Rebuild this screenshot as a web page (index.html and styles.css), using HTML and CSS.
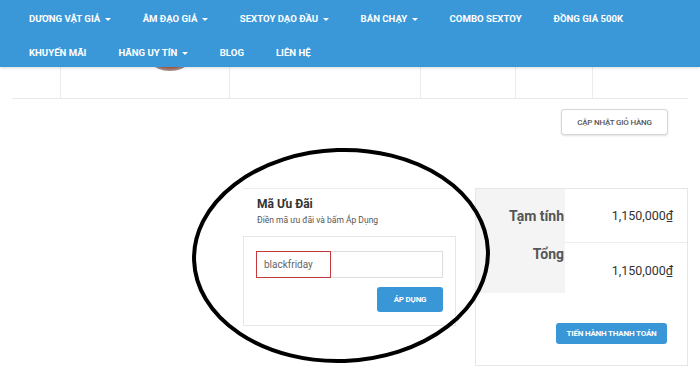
FILE: index.html
```html
<!DOCTYPE html>
<html lang="vi">
  <head>
    <meta charset="UTF-8" />
    <meta name="viewport" content="width=device-width, initial-scale=1.0" />
    <title>Giỏ hàng</title>
    <link rel="stylesheet" href="styles.css">
  </head>
  <body>
    <nav class="navbar">
      <ul>
        <li><a href="#">Dương vật giả <span class="caret"></span></a></li>
        <li><a href="#">Âm đạo giả <span class="caret"></span></a></li>
        <li><a href="#">Sextoy dạo đầu <span class="caret"></span></a></li>
        <li><a href="#">Bán chạy <span class="caret"></span></a></li>
        <li><a href="#">Combo sextoy</a></li>
        <li><a href="#">Đồng giá 500K</a></li>
        <li><a href="#">Khuyến mãi</a></li>
        <li><a href="#">Hãng uy tín <span class="caret"></span></a></li>
        <li><a href="#">Blog</a></li>
        <li><a href="#">Liên hệ</a></li>
      </ul>
    </nav>

    <div class="page">
      <div class="cart-row">
        <div class="cell"></div>
        <div class="cell thumb-cell"><div class="thumb"></div></div>
        <div class="cell"></div>
        <div class="cell"></div>
        <div class="cell"></div>
        <div class="cell"></div>
      </div>

      <div class="cart-actions">
        <button class="btn-update">Cập nhật giỏ hàng</button>
      </div>

      <div class="checkout">
        <div class="coupon">
          <h3>Mã Ưu Đãi</h3>
          <p>Điền mã ưu đãi và bấm Áp Dụng</p>
          <div class="coupon-box">
            <div class="coupon-field">
              <input type="text" value="blackfriday" />
              <span class="mark"></span>
            </div>
            <div class="coupon-submit">
              <button class="btn-blue">Áp dụng</button>
            </div>
          </div>
        </div>

        <div class="totals">
          <table>
            <tr>
              <th>Tạm tính</th>
              <td>1,150,000₫</td>
            </tr>
            <tr class="total-row">
              <th>Tổng</th>
              <td>1,150,000₫</td>
            </tr>
          </table>
          <div class="proceed">
            <button class="btn-blue btn-proceed">Tiến hành thanh toán</button>
          </div>
        </div>
      </div>
    </div>

    <!-- hand drawn circle round the coupon -->
    <svg class="scribble" width="700" height="376" viewBox="0 0 700 376">
      <ellipse cx="341" cy="255.5" rx="147" ry="105.5" transform="rotate(-2 341 255.5)" fill="none" stroke="#000" stroke-width="4" />
    </svg>
  </body>
</html>
```

FILE: styles.css
```css
body {
  font-family: Roboto, "Liberation Sans", sans-serif;
  background-color: #fff;
  color: #333;
  margin: 0;
}
.navbar {
  position: relative;
  z-index: 2;
  height: 67px;
  background-color: #3a98d9;
  box-shadow: 0 1px 3px rgba(0, 0, 0, 0.15);
}
.navbar ul {
  list-style-type: none;
  margin: 0;
  padding: 0 13px;
  display: flex;
  flex-wrap: wrap;
  width: 660px;
}
.navbar li {
  padding: 0 16px;
  height: 34px;
  line-height: 34px;
}
.navbar a {
  color: #fff;
  text-decoration: none;
  text-transform: uppercase;
  font-weight: 700;
  font-size: 9.6px;
}
.caret {
  display: inline-block;
  width: 0;
  height: 0;
  margin-left: 2px;
  vertical-align: middle;
  border-top: 3px solid #fff;
  border-left: 3px solid transparent;
  border-right: 3px solid transparent;
}
.page {
  padding: 0 12px;
}
.cart-row {
  display: grid;
  grid-template-columns: 48px 169px 191px 95px 77px 1fr;
  grid-template-rows: 80px;
  height: 80px;
  margin-top: -49px;
  border-bottom: 1px solid #e9e9e9;
}
.cell + .cell {
  border-left: 1px solid #ececec;
}
.thumb-cell {
  display: flex;
  justify-content: center;
  align-items: flex-end;
  padding-bottom: 27px;
  min-height: 0;
}
.thumb {
  flex-shrink: 0;
  width: 60px;
  height: 60px;
  margin-left: 50px;
  border-radius: 50%;
  border: 2px solid #a08a84;
  background-color: #b8604c;
  box-sizing: border-box;
}
.cart-actions {
  display: flex;
  justify-content: flex-end;
  padding: 10px 20px 0 0;
}
.btn-update {
  height: 26px;
  width: 107px;
  background-color: #fff;
  border: 1px solid #d6d6d6;
  border-radius: 3px;
  box-shadow: 0 1px 2px rgba(0, 0, 0, 0.12);
  color: #555;
  font-family: Roboto, sans-serif;
  font-size: 8px;
  font-weight: 500;
  letter-spacing: -0.2px;
  text-transform: uppercase;
}
.checkout {
  display: flex;
  justify-content: flex-end;
  gap: 19px;
  margin-top: 53px;
}
.coupon {
  width: 213px;
  border-top: 1px solid #ececec;
}
.coupon h3 {
  margin: 0;
  padding: 7px 0 0 14px;
  font-size: 12px;
  line-height: 16px;
  color: #333;
}
.coupon p {
  margin: 0;
  padding: 2px 0 0 14px;
  font-size: 8.5px;
  line-height: 12px;
  color: #555;
}
.coupon-box {
  margin-top: 10px;
  padding: 14px 12px 13px;
  border: 1px solid #e6e6e6;
}
.coupon-field {
  position: relative;
}
.coupon-field input {
  display: block;
  width: 100%;
  height: 27px;
  box-sizing: border-box;
  padding: 0 7px;
  border: 1px solid #dedede;
  font-family: Roboto, sans-serif;
  font-size: 10px;
  color: #666;
}
.mark {
  position: absolute;
  left: 0;
  top: 0;
  width: 75px;
  height: 27px;
  box-sizing: border-box;
  border: 1px solid #c43a3a;
}
.coupon-submit {
  display: flex;
  justify-content: flex-end;
  margin-top: 9px;
}
.btn-blue {
  height: 25px;
  background-color: #3a97d7;
  border: none;
  border-radius: 3px;
  color: #fff;
  font-family: Roboto, sans-serif;
  font-size: 8px;
  font-weight: 700;
  letter-spacing: -0.2px;
  text-transform: uppercase;
}
.coupon-submit .btn-blue {
  width: 66px;
}
.totals {
  width: 213px;
  height: 178px;
  box-sizing: border-box;
  border: 1px solid #e6e6e6;
}
.totals table {
  width: 100%;
  border-collapse: collapse;
}
.totals th {
  width: 88px;
  padding: 0 1px 0 0;
  background-color: #f4f4f4;
  text-align: right;
  font-size: 14px;
  color: #555;
}
.totals td {
  padding: 0 14px 0 0;
  text-align: right;
  font-size: 12.5px;
  color: #333;
}
.totals tr:first-child th,
.totals tr:first-child td {
  height: 53px;
}
.total-row th,
.total-row td {
  height: 35px;
  border-top: 1px solid #ececec;
}
.total-row th {
  vertical-align: top;
  padding-top: 3px;
  padding-bottom: 12px;
  border-top-color: #f4f4f4;
}
.total-row td {
  vertical-align: bottom;
  padding-bottom: 15px;
}
.proceed {
  display: flex;
  justify-content: flex-end;
  padding: 30px 20px 0 0;
}
.btn-proceed {
  width: 111px;
  height: 21px;
}
.scribble {
  position: absolute;
  left: 0;
  top: 0;
  pointer-events: none;
}
```
